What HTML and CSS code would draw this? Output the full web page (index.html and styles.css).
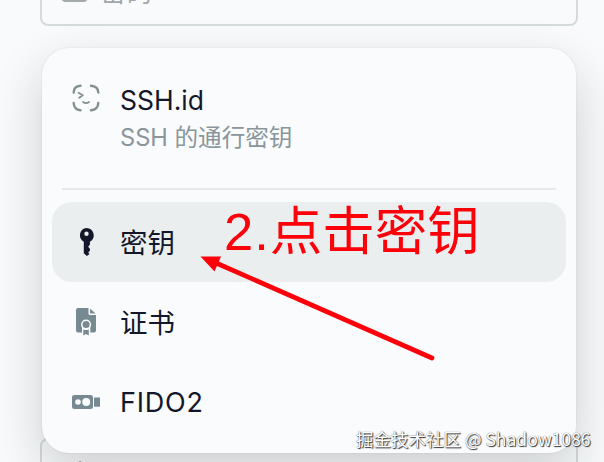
FILE: index.html
```
<!DOCTYPE html>
<html lang="zh-CN">
<head>
<meta charset="utf-8">
<title>SSH</title>
<link rel="stylesheet" href="styles.css">
</head>
<body>
<main class="form">
  <div class="field field-top">
    <svg class="field-icon" width="28" height="20" viewBox="0 0 28 20"><rect x="1.500" y="1" width="24" height="17.500" rx="3" fill="none" stroke="#a5abad" stroke-width="3"/></svg>
    <span>密码</span>
  </div>
  <div class="field field-bottom">
    <svg width="10" height="8" viewBox="0 0 10 8"><path d="M2 2L8 7" stroke="#8b9193" stroke-width="3"/></svg>
  </div>
</main>
<nav class="menu">
  <div class="item item-tall">
    <svg class="icon" width="28" height="28" viewBox="0 0 28 28" fill="none" stroke="#84908f" stroke-linecap="round" stroke-linejoin="round"><path stroke-width="2.400" d="M1.700 8.500Q1.700 2 8.500 1.700M19 1.700Q26 2 26.300 8.500M1.700 19Q2 25.700 8.500 26.300M26.300 19Q26 25.700 19 26.300"/><path stroke-width="1.800" d="M6.500 8.800L10.800 11.200L7.200 13.700M11 18Q14 20.200 17 18"/></svg>
    <div class="copy"><div class="label latin">SSH.id</div><div class="sub">SSH 的通行密钥</div></div>
  </div>
  <div class="divider"></div>
  <div class="item selected">
    <svg class="icon" width="28" height="28" viewBox="0 0 28 28"><path fill="#141729" fill-rule="evenodd" d="M14.500 0a7.300 7.300 0 0 1 3.400 13.700v3l-1.700 2 1.700 2v2l-1.700 1.800 1.300 1.500-2.600 2-3.100-2.700V13.700A7.300 7.300 0 0 1 14.500 0ZM14.500 3.500a2.200 2.200 0 1 0 0 4.400 2.200 2.200 0 0 0 0-4.400Z"/></svg>
    <div class="label">密钥</div>
  </div>
  <div class="item">
    <svg class="icon" width="28" height="28" viewBox="0 0 28 28"><path fill="#788a91" d="M6 0H16.500V5.700Q16.500 7 18 7H24V22.500Q24 24.500 22 24.500H6Q4 24.500 4 22.500V2Q4 0 6 0Z"/><path fill="#788a91" d="M18 .5L23.500 5.500H18Z"/><path fill="#f9fbfc" d="M10 19H18.300V28H10Z"/><circle cx="14.100" cy="16.500" r="4.300" fill="#788a91" stroke="#f9fbfc" stroke-width="1.500"/><path fill="#788a91" d="M11.300 21.500Q14 22.500 16.800 21.500V27.600L14 26L11.300 27.600Z"/></svg>
    <div class="label">证书</div>
  </div>
  <div class="item">
    <svg class="icon" width="28" height="28" viewBox="0 0 28 28"><rect y="7" width="21" height="14" rx="2.500" fill="#788a91"/><path fill="#788a91" d="M22 9.500H28V18.700H22Z"/><circle cx="6" cy="14" r="2.800" fill="#f9fbfc"/><circle cx="14.200" cy="14" r="4" fill="#f9fbfc"/></svg>
    <div class="label latin fido">FIDO2</div>
  </div>
</nav>
<svg class="arrow" width="604" height="462" viewBox="0 0 604 462"><path d="M215 262.500L432 358" stroke="#fe0009" stroke-width="4.700" stroke-linecap="round"/><path d="M200.500 256.500L221 256.500L214.500 271.500Z" fill="#fe0009"/></svg>
<div class="note"><span class="num">2.</span>点击密钥</div>
<div class="watermark">掘金技术社区 @ Shadow1086</div>
</body>
</html>
```
FILE: styles.css
```
* { box-sizing: border-box; }
body {
  margin: 0;
  width: 604px;
  height: 462px;
  overflow: hidden;
  position: relative;
  background: #f8fafb;
  font-family: Inter, "Noto Sans CJK SC", sans-serif;
}
.form {
  height: 462px;
  padding: 0 26px 0 40px;
  overflow: hidden;
  display: flex;
  flex-direction: column;
  justify-content: space-between;
}
.field {
  border: 2px solid #d5dadb;
  border-radius: 8px;
  display: flex;
  flex: none;
}
.field-top {
  height: 66px;
  margin-top: -40px;
  padding: 18px 0 0 19px;
  gap: 11px;
  color: #a0a6a8;
  font-size: 26px;
  line-height: 26px;
}
.field-icon { margin-top: 2px; }
.field-bottom {
  height: 66px;
  margin-bottom: -42px;
  padding: 20px 0 0 35px;
}
.menu {
  position: absolute;
  left: 42px;
  top: 48px;
  width: 534px;
  height: 405px;
  padding: 0 10px;
  border-radius: 27px;
  background: #f9fbfc;
  box-shadow: 0 0 2px rgba(0, 0, 0, .1), 0 20px 50px rgba(20, 24, 28, .19);
}
.item {
  height: 80px;
  padding-left: 20px;
  display: flex;
  align-items: center;
  gap: 20px;
  border-radius: 20px;
}
.item-tall { height: 140px; align-items: flex-start; padding-top: 36px; }
.selected { background: #eaeeef; }
.icon { flex: none; }
.divider { height: 2px; margin: 0 10px 12px; background: #e7eaeb; }
.label {
  padding-top: 2px;
  color: #141729;
  font-size: 27.500px;
  line-height: 32px;
  white-space: nowrap;
}
.latin { padding-top: 0; font-size: 26.500px; }
.fido { padding-top: 1px; font-size: 27px; letter-spacing: .8px; }
.sub {
  margin-top: 8px;
  color: #89969b;
  font-size: 23.600px;
  line-height: 28px;
  white-space: nowrap;
}
.arrow { position: absolute; left: 0; top: 0; }
.note {
  position: absolute;
  left: 224px;
  top: 199px;
  color: #fe0009;
  font-size: 52.500px;
  line-height: 64px;
  white-space: nowrap;
}
.num { font-family: "Liberation Sans", sans-serif; letter-spacing: 1px; }
.watermark {
  position: absolute;
  left: 356px;
  top: 427px;
  color: #fff;
  font-family: "Noto Sans CJK SC", sans-serif;
  font-size: 17.500px;
  line-height: 24px;
  white-space: nowrap;
  text-shadow: 1px 1px 1px #333, 0 0 1px #444;
}
```
